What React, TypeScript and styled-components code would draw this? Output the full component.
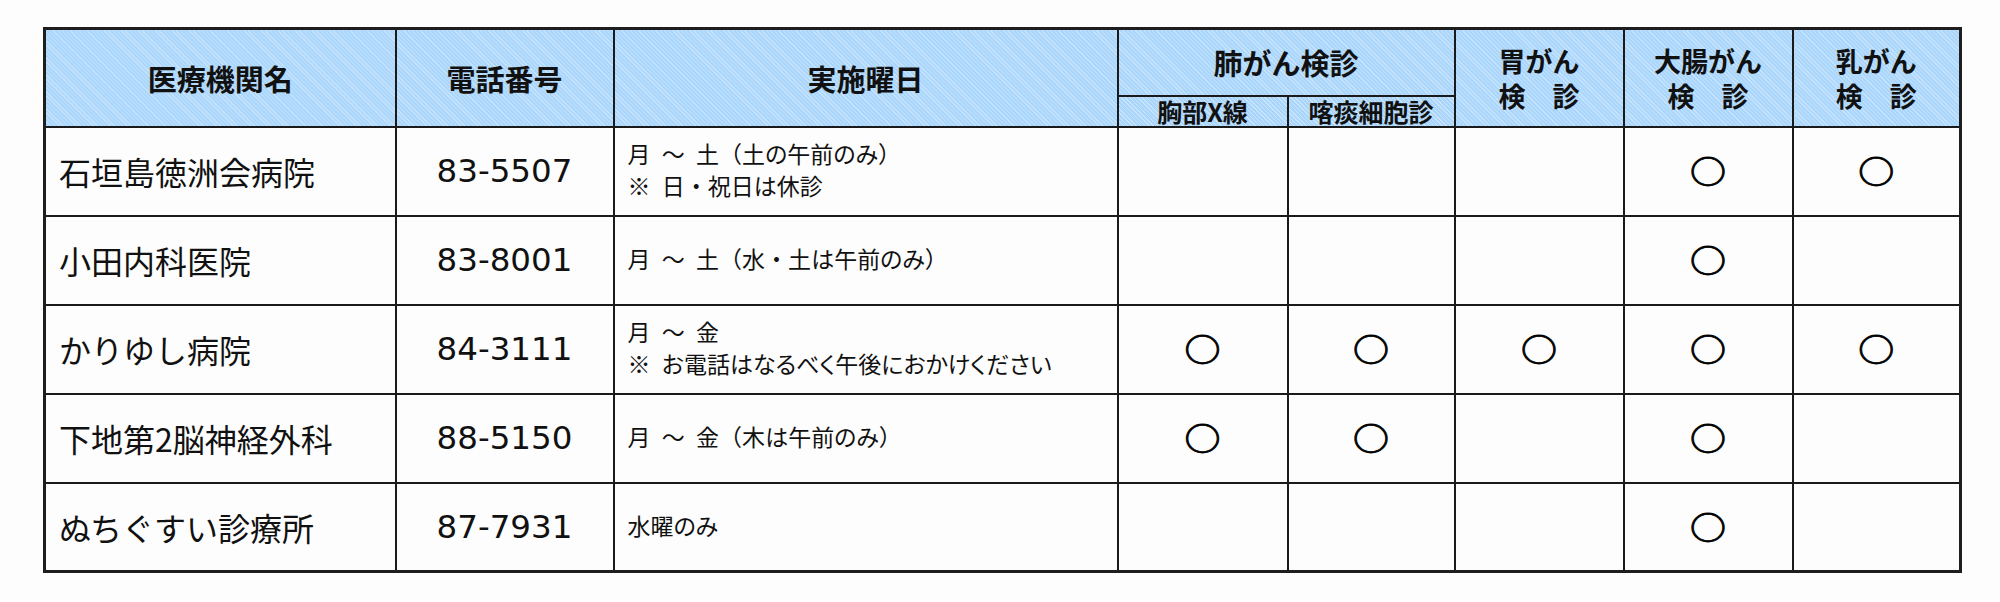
import * as React from 'react';
import styled, { createGlobalStyle, css } from 'styled-components';

const GlobalStyle = createGlobalStyle`
  html, body {
    margin: 0;
    padding: 0;
    background: #fdfdfd;
  }
`;

const Page = styled.div`
  padding: 27px 0 0 43px;
`;

const Table = styled.table`
  border-collapse: collapse;
  table-layout: fixed;
  width: 1918px;
  border: 3px solid #1e1e1e;
  color: #111111;
`;

const HeadCell = styled.th<{ size?: 'main' | 'double' | 'sub' }>`
  border: 2px solid #1a1a1a;
  background-color: #a9d5fb;
  background-image: repeating-linear-gradient(
    45deg,
    rgba(215, 236, 255, 0.7) 0 1px,
    transparent 1px 3px
  );
  font-family: 'Noto Sans CJK JP', 'DejaVu Sans', sans-serif;
  font-weight: 700;
  text-align: center;
  vertical-align: middle;
  padding: 0;
  font-size: 29px;
  line-height: 36px;
  ${(p) =>
    p.size === 'double' &&
    css`
      font-size: 27px;
      line-height: 35px;
    `}
  ${(p) =>
    p.size === 'sub' &&
    css`
      font-size: 25px;
      line-height: 29px;
    `}
`;

const HeadRow = styled.tr<{ h: number }>`
  height: ${(p) => p.h}px;
`;

const BodyRow = styled.tr`
  height: 89px;
`;

const Cell = styled.td<{ kind?: 'name' | 'tel' | 'days' | 'mark' }>`
  border: 2px solid #1a1a1a;
  background: #fdfdfd;
  vertical-align: middle;
  padding: 0 0 0 13px;
  font-family: 'Noto Sans CJK JP', sans-serif;
  font-size: 32px;
  white-space: nowrap;
  ${(p) =>
    p.kind === 'tel' &&
    css`
      font-family: 'DejaVu Sans', 'Noto Sans CJK JP', sans-serif;
      font-size: 32.5px;
      text-align: center;
      padding: 0;
    `}
  ${(p) =>
    p.kind === 'days' &&
    css`
      font-family: 'DejaVu Sans', 'Noto Sans CJK JP', sans-serif;
      font-size: 23px;
      line-height: 30px;
      word-spacing: 4px;
    `}
  ${(p) =>
    p.kind === 'mark' &&
    css`
      text-align: center;
      padding: 0;
    `}
`;

const Mark = styled.span`
  display: inline-block;
  font-family: 'Noto Sans CJK JP', sans-serif;
  font-weight: 700;
  font-size: 36px;
  line-height: 36px;
  color: #000;
  -webkit-text-stroke: 0.9px #000;
  transform: scaleY(0.86);
`;

const CjkChunk = styled.span`
  font-family: 'Noto Sans CJK JP', sans-serif;
`;

const Kana = styled.span`
  font-feature-settings: 'palt';
`;

type Clinic = {
  name: string;
  tel: string;
  days: string[];
  marks: boolean[];
};

const clinics: Clinic[] = [
  {
    name: '石垣島徳洲会病院',
    tel: '83-5507',
    days: ['月 ～ 土（土の午前のみ）', '※ 日・祝日は休診'],
    marks: [false, false, false, true, true],
  },
  {
    name: '小田内科医院',
    tel: '83-8001',
    days: ['月 ～ 土（水・土は午前のみ）'],
    marks: [false, false, false, true, false],
  },
  {
    name: 'かりゆし病院',
    tel: '84-3111',
    days: ['月 ～ 金', '※ お電話はなるべく午後におかけください'],
    marks: [true, true, true, true, true],
  },
  {
    name: '下地第2脳神経外科',
    tel: '88-5150',
    days: ['月 ～ 金（木は午前のみ）'],
    marks: [true, true, false, true, false],
  },
  {
    name: 'ぬちぐすい診療所',
    tel: '87-7931',
    days: ['水曜のみ'],
    marks: [false, false, false, true, false],
  },
];

const colWidths = [351, 218, 504, 170, 167, 169, 169, 168];

// hiragana runs get proportional widths, the rest stays full width
function DayLine({ text }: { text: string }) {
  const parts = text.split(/([\u3040-\u309f]+|※)/).filter(Boolean);
  return (
    <div>
      {parts.map((part, i) => {
        if (part === '※') return <CjkChunk key={i}>※</CjkChunk>;
        if (/^[\u3040-\u309f]+$/.test(part)) return <Kana key={i}>{part}</Kana>;
        return <React.Fragment key={i}>{part}</React.Fragment>;
      })}
    </div>
  );
}

export default function App() {
  return (
    <Page>
      <GlobalStyle />
      <Table>
        <colgroup>
          {colWidths.map((w, i) => (
            <col key={i} style={{ width: w }} />
          ))}
        </colgroup>
        <thead>
          <HeadRow h={67}>
            <HeadCell rowSpan={2}>医療機関名</HeadCell>
            <HeadCell rowSpan={2}>電話番号</HeadCell>
            <HeadCell rowSpan={2}>実施曜日</HeadCell>
            <HeadCell colSpan={2}>肺がん検診</HeadCell>
            <HeadCell rowSpan={2} size="double">
              胃がん
              <br />
              検　診
            </HeadCell>
            <HeadCell rowSpan={2} size="double">
              大腸がん
              <br />
              検　診
            </HeadCell>
            <HeadCell rowSpan={2} size="double">
              乳がん
              <br />
              検　診
            </HeadCell>
          </HeadRow>
          <HeadRow h={31}>
            <HeadCell size="sub">胸部X線</HeadCell>
            <HeadCell size="sub">喀痰細胞診</HeadCell>
          </HeadRow>
        </thead>
        <tbody>
          {clinics.map((c) => (
            <BodyRow key={c.name}>
              <Cell kind="name">{c.name}</Cell>
              <Cell kind="tel">{c.tel}</Cell>
              <Cell kind="days">
                {c.days.map((line, i) => (
                  <DayLine key={i} text={line} />
                ))}
              </Cell>
              {c.marks.map((m, i) => (
                <Cell kind="mark" key={i}>
                  {m && <Mark>○</Mark>}
                </Cell>
              ))}
            </BodyRow>
          ))}
        </tbody>
      </Table>
    </Page>
  );
}
